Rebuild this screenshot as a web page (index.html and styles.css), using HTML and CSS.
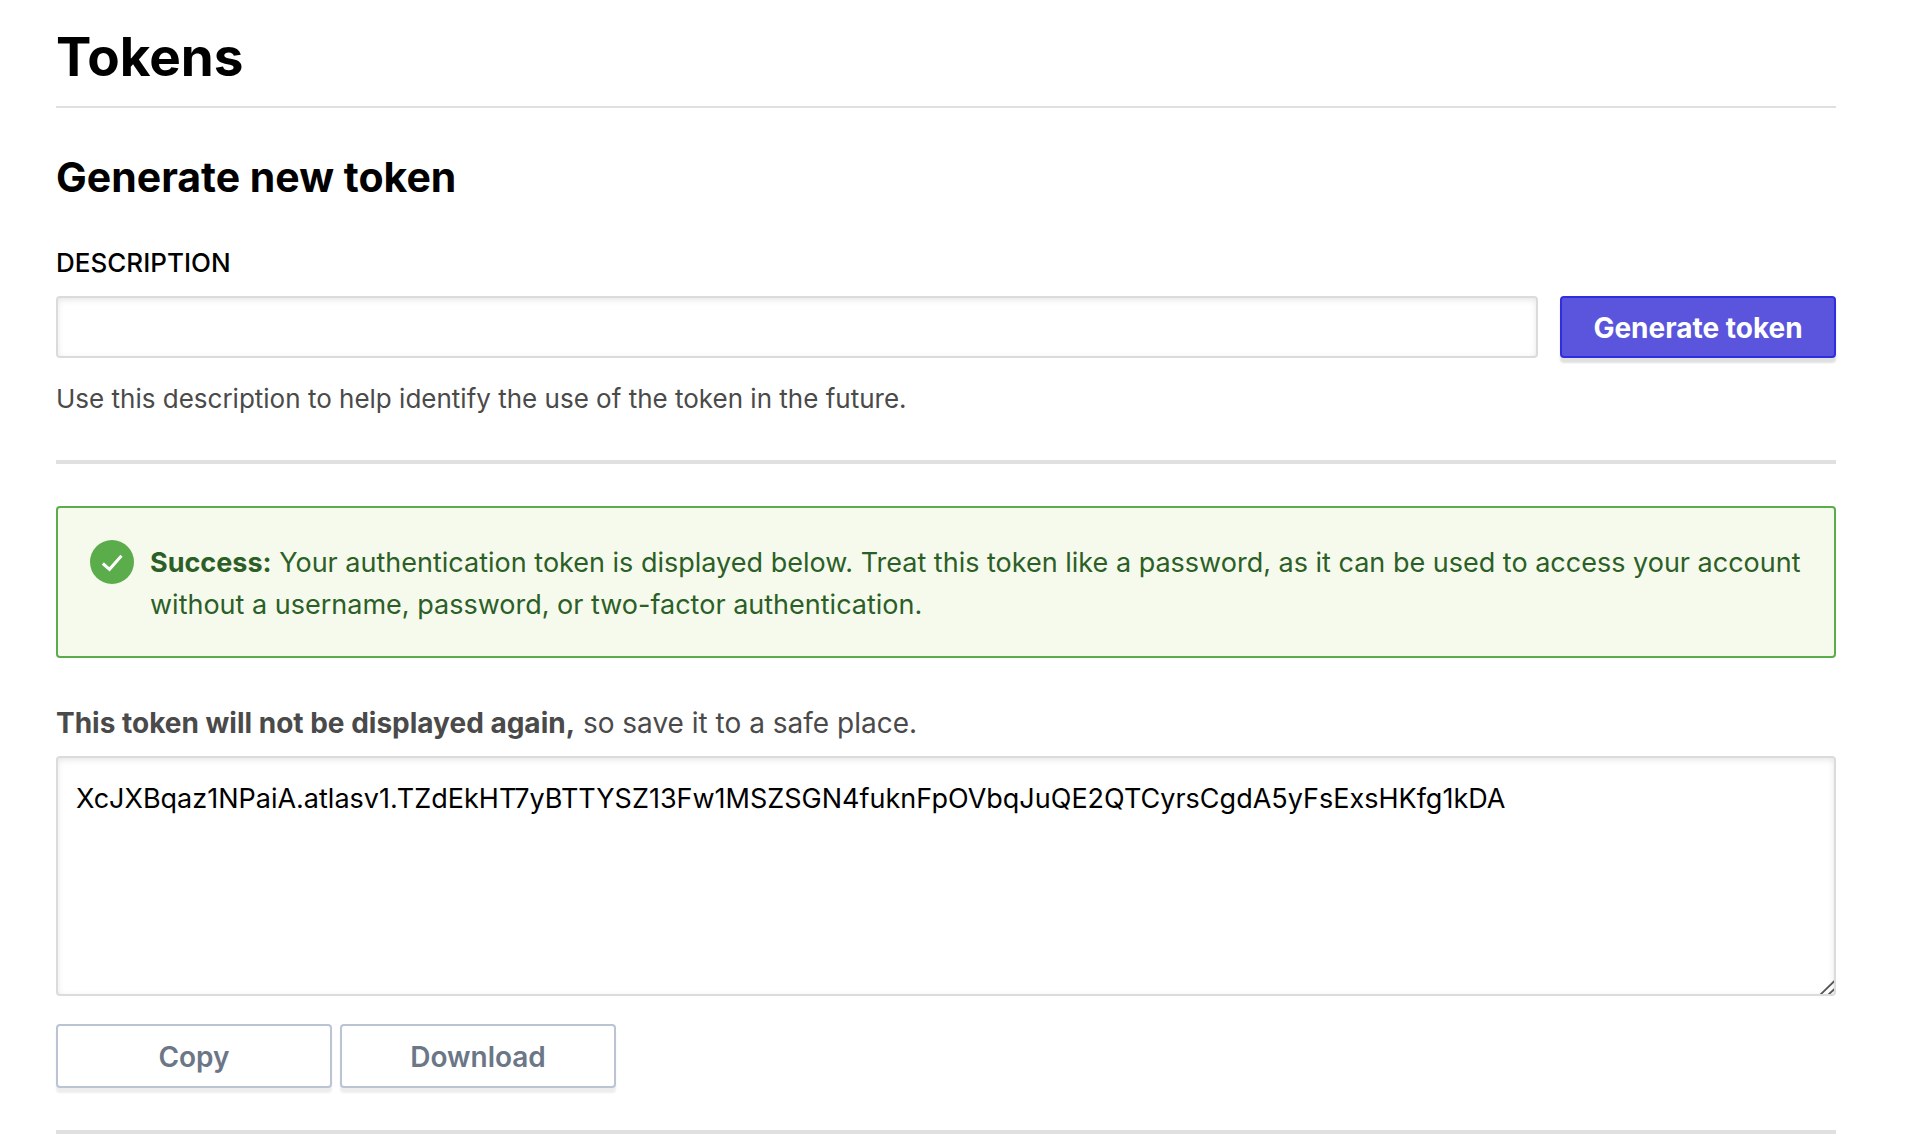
FILE: index.html
```html
<!DOCTYPE html>
<html lang="en">
<head>
<meta charset="utf-8">
<meta name="viewport" content="width=device-width, initial-scale=1">
<title>Tokens</title>
<link rel="stylesheet" href="styles.css">
</head>
<body>
<main class="page">
  <h1 class="page-title">Tokens</h1>

  <form class="token-form">
    <h2 class="section-title">Generate new token</h2>
    <label class="field-label" for="description">Description</label>
    <div class="field-row">
      <input class="text-input" id="description" type="text" aria-describedby="description-help">
      <button class="button button-primary" type="submit">Generate token</button>
    </div>
    <p class="help" id="description-help">Use this description to help identify the use of the token in the future.</p>
  </form>

  <section class="result">
    <div class="alert" role="status">
      <svg class="alert-icon" viewBox="0 0 44 44" aria-hidden="true">
        <circle cx="22" cy="22" r="22" fill="#5aad4a"/>
        <path d="M12.800 23.500 19.500 29.300 31.500 15.800" fill="none" stroke="#fff" stroke-width="3"/>
      </svg>
      <p class="alert-text"><strong>Success:</strong> Your authentication token is displayed below. Treat this token like a password, as it can be used to access your account without a username, password, or two-factor authentication.</p>
    </div>
    <label class="token-label" for="token"><strong>This token will not be displayed again,</strong> so save it to a safe place.</label>
    <textarea class="token-value" id="token" spellcheck="false">XcJXBqaz1NPaiA.atlasv1.TZdEkHT7yBTTYSZ13Fw1MSZSGN4fuknFpOVbqJuQE2QTCyrsCgdA5yFsExsHKfg1kDA</textarea>
    <div class="actions">
      <button class="button button-secondary" type="button">Copy</button>
      <button class="button button-secondary" type="button">Download</button>
    </div>
  </section>
</main>
</body>
</html>
```
FILE: styles.css
```css
*, *::before, *::after {
  box-sizing: border-box;
}

body {
  margin: 0;
  background: #fff;
  color: #000;
  font-family: Inter, "Liberation Sans", sans-serif;
  font-size: 27px;
  line-height: 42px;
}

h1, h2, p {
  margin: 0;
}

.page {
  padding: 24px 94px 0 56px;
}

.page-title {
  padding-bottom: 16px;
  border-bottom: 2px solid #e0e0e0;
  font-size: 53px;
  font-weight: 700;
  line-height: 66px;
}

.token-form {
  padding: 43px 0 41px;
  border-bottom: 4px solid #e0e0e0;
}

.section-title {
  margin-bottom: 40px;
  font-size: 41px;
  font-weight: 700;
  line-height: 52px;
}

.field-label {
  display: block;
  margin-bottom: 13px;
  font-size: 26px;
  font-weight: 500;
  line-height: 40px;
  text-transform: uppercase;
}

.field-row {
  display: flex;
  gap: 22px;
}

.text-input {
  flex: 1;
  min-width: 0;
  height: 62px;
  padding: 0 18px;
}

.text-input, .token-value {
  border: 2px solid #dbdbdb;
  border-radius: 4px;
  background: #fff;
  box-shadow: inset 0 2px 6px rgba(0, 0, 0, 0.1);
  color: #000;
  font: inherit;
}

.help {
  margin-top: 21px;
  color: #4a4a4a;
  font-size: 26px;
  line-height: 40px;
}

.button {
  width: 276px;
  height: 64px;
  padding: 2px 0 0;
  border: 2px solid;
  border-radius: 4px;
  font: inherit;
  font-size: 28px;
  font-weight: 600;
}

.button-primary {
  height: 62px;
  border-color: #2e2ee0;
  background: #5a55dc;
  box-shadow: 0 5px 2px rgba(0, 0, 0, 0.12);
  color: #fff;
  font-weight: 700;
}

.button-secondary {
  border-color: #bac4d3;
  background: #fff;
  box-shadow: 0 5px 2px rgba(0, 0, 0, 0.07);
  color: #6b7687;
}

.result {
  padding: 42px 0;
  border-bottom: 4px solid #e0e0e0;
}

.alert {
  display: flex;
  gap: 16px;
  padding: 32px 8px 30px 32px;
  border: 2px solid #5aad4a;
  border-radius: 4px;
  background: #f6faec;
  color: #2c5f28;
}

.alert-text {
  padding-top: 2px;
}

.alert-icon {
  flex: none;
  width: 44px;
  height: 44px;
}

.token-label {
  display: block;
  margin: 44px 0 12px;
  color: #4a4a4a;
  font-size: 28px;
}

.token-value {
  display: block;
  width: 100%;
  height: 240px;
  padding: 20px 18px;
  resize: vertical;
}

.token-value::-webkit-scrollbar {
  width: 20px;
  height: 20px;
}

.token-value::-webkit-resizer {
  background: url("data:image/svg+xml,%3Csvg xmlns='http://www.w3.org/2000/svg' width='20' height='20'%3E%3Cpath d='M1 16 15.500 2M9 16 15.500 10' fill='none' stroke='%23555' stroke-width='1.800'/%3E%3C/svg%3E") no-repeat;
}

.actions {
  display: flex;
  gap: 8px;
  margin-top: 28px;
}
```
